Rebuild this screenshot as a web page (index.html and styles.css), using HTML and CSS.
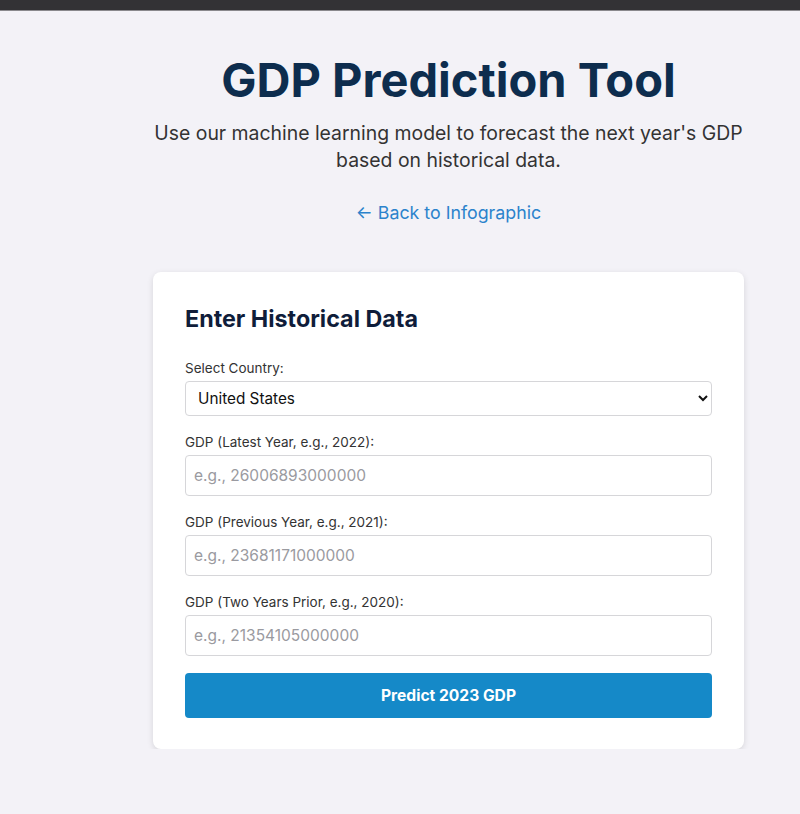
FILE: index.html
```html
<!DOCTYPE html>
<html lang="en">
<head>
<meta charset="utf-8">
<title>GDP Prediction Tool</title>
<link rel="stylesheet" href="styles.css">
</head>
<body>
<div class="topbar"></div>
<main class="page">
  <header class="hero">
    <h1 class="title">GDP Prediction Tool</h1>
    <p class="subtitle">Use our machine learning model to forecast the next year's GDP based on historical data.</p>
    <a class="back" href="#">← Back to Infographic</a>
  </header>
  <section class="card">
    <h2 class="card-title">Enter Historical Data</h2>
    <form class="form">
      <div class="field">
        <label class="label" for="country">Select Country:</label>
        <select class="select" id="country">
          <option>United States</option>
        </select>
      </div>
      <div class="field">
        <label class="label" for="g1">GDP (Latest Year, e.g., 2022):</label>
        <input class="input" id="g1" type="text" placeholder="e.g., 26006893000000">
      </div>
      <div class="field">
        <label class="label" for="g2">GDP (Previous Year, e.g., 2021):</label>
        <input class="input" id="g2" type="text" placeholder="e.g., 23681171000000">
      </div>
      <div class="field">
        <label class="label" for="g3">GDP (Two Years Prior, e.g., 2020):</label>
        <input class="input" id="g3" type="text" placeholder="e.g., 21354105000000">
      </div>
      <button class="button" type="button">Predict 2023 GDP</button>
    </form>
  </section>
</main>
</body>
</html>
```
FILE: styles.css
```css
* { box-sizing: border-box; }
html, body { margin: 0; padding: 0; }
body {
  background: #f3f2f7;
  font-family: Inter, "Noto Sans", sans-serif;
  color: #333;
}
.topbar {
  height: 11px;
  background: #333235;
  border-bottom: 1px solid #8a898d;
}
.page {
  width: 591px;
  margin-left: 153px;
  padding-top: 39px;
}
.hero {
  display: flex;
  flex-direction: column;
  align-items: center;
  text-align: center;
}
.title {
  margin: 0;
  font-size: 47px;
  font-weight: 700;
  color: #0d2d4e;
  line-height: 60px;
}
.subtitle {
  margin: 10px 0 0;
  font-size: 19.4px;
  line-height: 27px;
  color: #333;
}
.back {
  margin-top: 25px;
  font-size: 17.8px;
  line-height: 27px;
  color: #2b83cc;
  text-decoration: none;
}
.card {
  margin-top: 46px;
  background: #fff;
  border-radius: 8px;
  box-shadow: 0 2px 6px rgba(0,0,0,0.12);
  padding: 32px 32px 31px;
}
.card-title {
  margin: 0 0 25px;
  font-size: 23.3px;
  line-height: 30px;
  font-weight: 700;
  color: #0f1d3a;
}
.form {
  display: flex;
  flex-direction: column;
  gap: 17px;
}
.field {
  display: flex;
  flex-direction: column;
  gap: 4px;
}
.label {
  font-size: 13.5px;
  line-height: 18px;
  color: #333;
}
.select {
  height: 35px;
  border: 1px solid #d6d6d9;
  border-radius: 4px;
  background: #fff;
  font-family: inherit;
  font-size: 15.3px;
  color: #111;
  padding: 0 8px;
}
.input {
  height: 41px;
  border: 1px solid #d6d6d9;
  border-radius: 4px;
  background: #fff;
  font-family: inherit;
  font-size: 15.5px;
  padding: 0 8px;
  color: #111;
}
.input::placeholder { color: #9a9aa0; }
.button {
  height: 45px;
  border: none;
  border-radius: 4px;
  background: #1589c8;
  color: #fff;
  font-family: inherit;
  font-size: 15.6px;
  font-weight: 700;
}
```
